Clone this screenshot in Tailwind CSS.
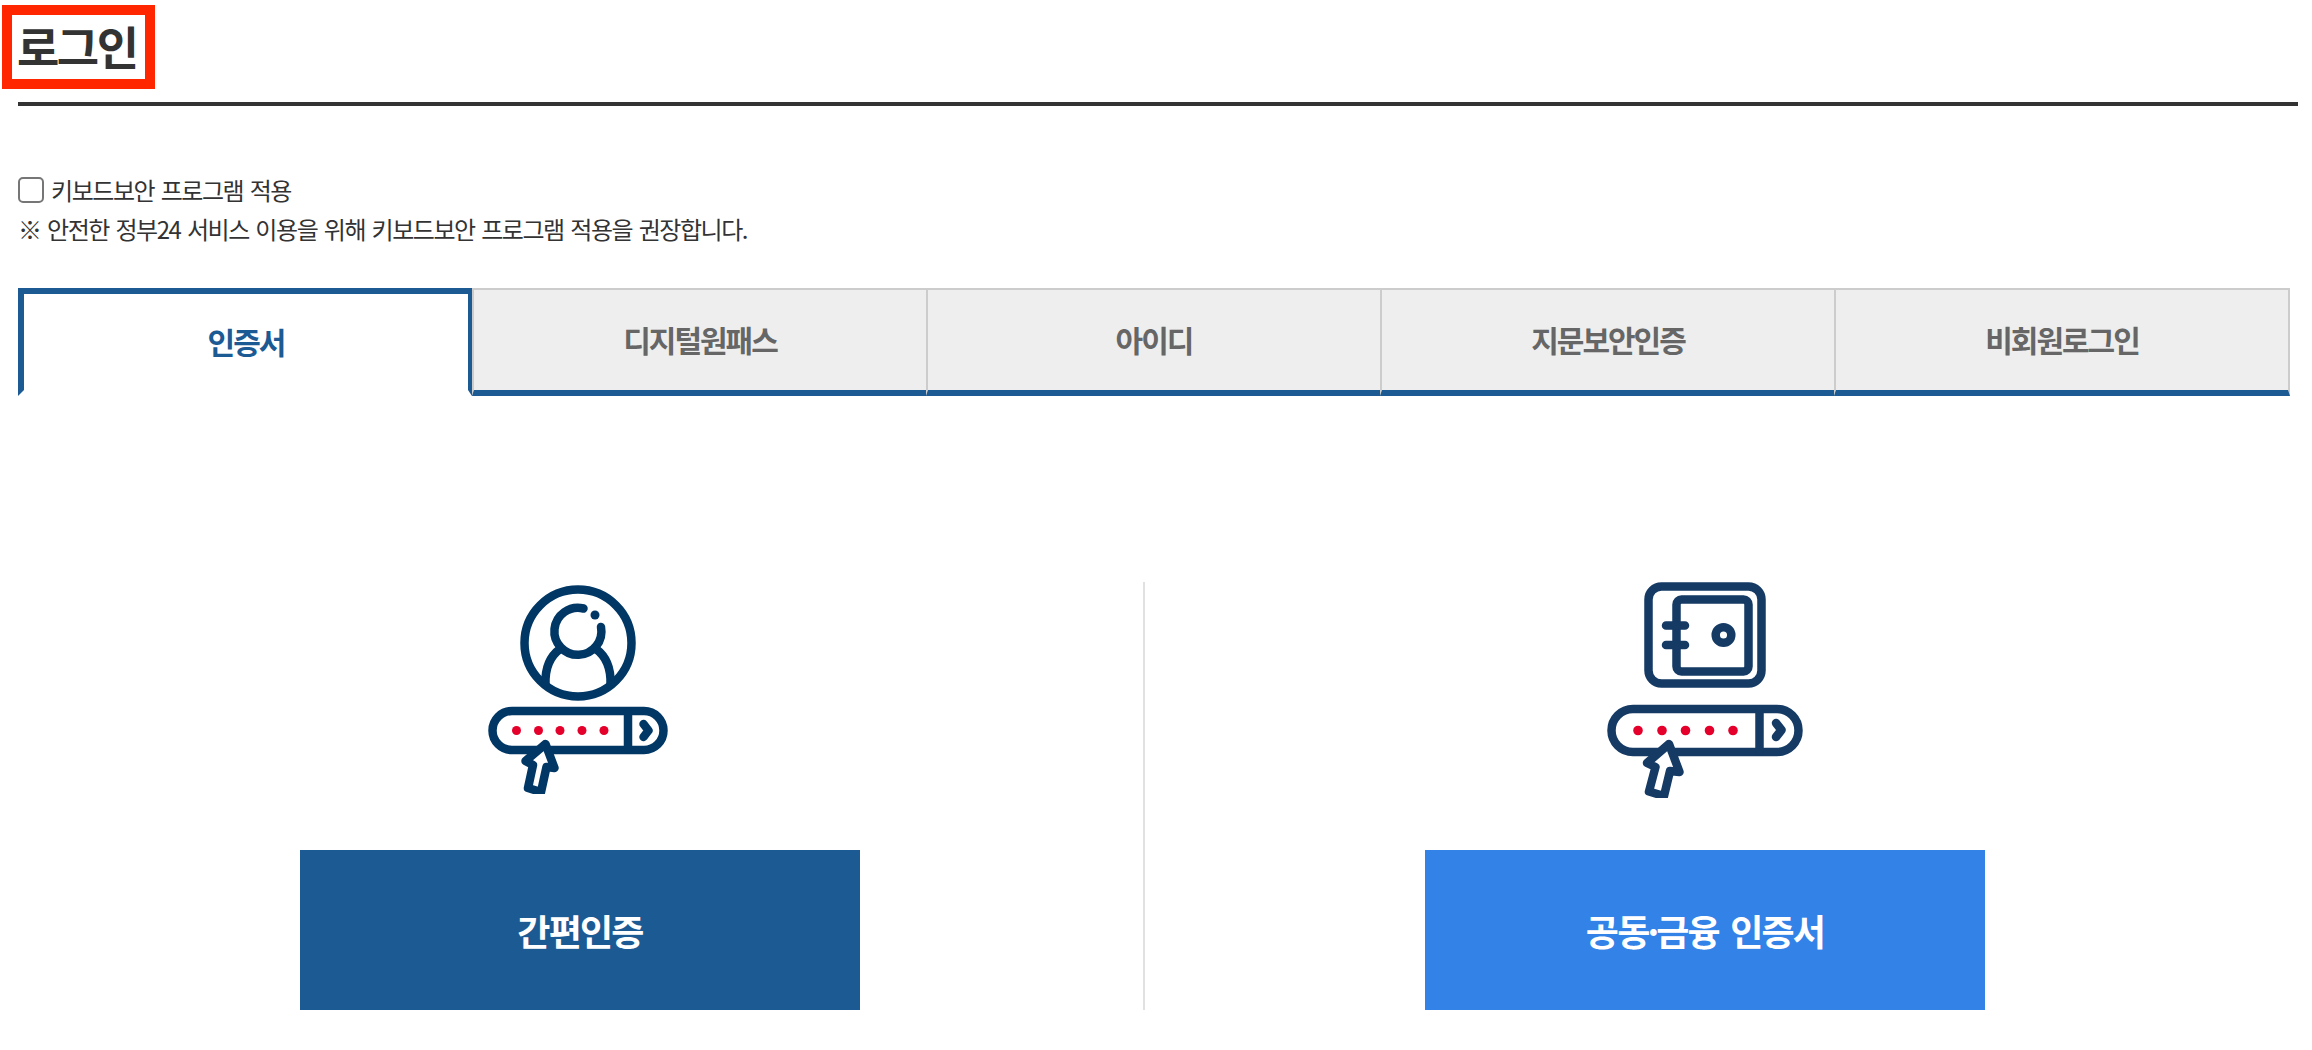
<!DOCTYPE html>
<html lang="ko">
<head>
    <meta charset="UTF-8">
    <meta name="viewport" content="width=device-width, initial-scale=1.0">
    <title>로그인</title>
    <script src="https://cdn.jsdelivr.net/npm/@tailwindcss/browser@4"></script>
</head>
<body class="bg-white h-[1050px] overflow-hidden font-['Noto_Sans_CJK_KR',sans-serif] text-[#333]">

    <!-- Page title -->
    <header class="ml-[18px] mr-3.5 h-[106px] border-b-4 border-[#333] pt-[5px]">
        <h1 class="-ml-4 w-[153px] h-[84px] border-[10px] border-[#ff2600] pl-[5px] text-[46px] leading-[60px] font-bold tracking-[-2.5px] whitespace-nowrap">로그인</h1>
    </header>

    <main class="ml-[18px] mr-[22px]">
        <!-- Keyboard security option -->
        <div class="pt-[64px] h-[182px] text-[24px] leading-[40px] tracking-[-0.06em] [word-spacing:1.2px]">
            <label class="flex items-center">
                <input type="checkbox" class="appearance-none size-[26px] mr-[7px] border-2 border-[#767676] rounded-[5px] bg-white">
                <span>키보드보안 프로그램 적용</span>
            </label>
            <p class="-mt-px"><span class="font-bold">※</span> 안전한 정부24 서비스 이용을 위해 키보드보안 프로그램 적용을 권장합니다.</p>
        </div>

        <!-- Login tabs -->
        <nav class="grid grid-cols-[repeat(4,454px)_456px] h-[108px] text-[30px] leading-[98px] tracking-[-2px] font-bold text-center text-[#666]">
            <a href="#" class="border-t-6 border-l-6 border-r-4 border-b-6 border-[#1c5a94] border-b-transparent text-[#1c5a94] bg-white leading-[94px]">인증서</a>
            <a href="#" class="border-t-2 border-l-2 border-b-6 border-[#ccc] border-b-[#1c5a94] bg-[#eee]">디지털원패스</a>
            <a href="#" class="border-t-2 border-l-2 border-b-6 border-[#ccc] border-b-[#1c5a94] bg-[#eee]">아이디</a>
            <a href="#" class="border-t-2 border-l-2 border-b-6 border-[#ccc] border-b-[#1c5a94] bg-[#eee]">지문보안인증</a>
            <a href="#" class="border-t-2 border-x-2 border-b-6 border-[#ccc] border-b-[#1c5a94] bg-[#eee]">비회원로그인</a>
        </nav>
    </main>

    <!-- Certificate choices -->
    <section class="mt-[186px] ml-[18px] mr-[22px] grid grid-cols-[1127px_1fr] h-[428px] text-[36px] font-bold tracking-[-0.05em] text-white">
        <div class="flex flex-col items-center justify-between border-r-2 border-[#e1e1e1] pr-px">
            <svg class="mt-[3px] -ml-1" width="180" height="209" viewBox="0 0 180 209" fill="none" stroke="#003764" stroke-width="8.5" stroke-linecap="round" stroke-linejoin="round">
                <circle cx="90" cy="58" r="53.5"/>
                <path d="M95.500 23.500A23.500 23.500 0 1 0 113 42"/>
                <circle cx="107" cy="30" r="4.500" fill="#003764" stroke="none"/>
                <path d="M72 64C61 72 57 83 57.500 99M108 64c11 8 15 19 14.500 35"/>
                <rect x="4.500" y="126" width="171" height="39" rx="19.500"/>
                <path d="M140 127v37"/>
                <path d="M155.500 139l5 6.500-5 6.500"/>
                <g fill="#e4002b" stroke="none">
                    <circle cx="28.500" cy="145.500" r="4.500"/><circle cx="50.500" cy="145.500" r="4.500"/><circle cx="72" cy="145.500" r="4.500"/><circle cx="94" cy="145.500" r="4.500"/><circle cx="116" cy="145.500" r="4.500"/>
                </g>
                <path d="M57.500 159L37.500 176l7.500 4-5 23 13 4 5.500-25 8 1z" fill="#fff"/>
            </svg>
            <a href="#" class="w-[560px] h-[160px] bg-[#1c5a94] leading-[160px] text-center">간편인증</a>
        </div>
        <div class="flex flex-col items-center justify-between pr-[25px]">
            <svg width="196" height="216" viewBox="0 0 196 216" fill="none" stroke="#153a64" stroke-width="8.5" stroke-linecap="round" stroke-linejoin="round">
                <rect x="41.500" y="4.500" width="113" height="97" rx="13"/>
                <rect x="69.500" y="17.500" width="72" height="72" rx="5"/>
                <path d="M59 43.500h19M59 63h19"/>
                <circle cx="116.500" cy="53" r="7.800"/>
                <rect x="4.500" y="127" width="187" height="43" rx="21.500"/>
                <path d="M152.500 128v41"/>
                <path d="M169 141l5.500 7-5.500 7"/>
                <g fill="#e4002b" stroke="none">
                    <circle cx="31" cy="148.500" r="4.800"/><circle cx="55" cy="148.500" r="4.800"/><circle cx="78.500" cy="148.500" r="4.800"/><circle cx="102.500" cy="148.500" r="4.800"/><circle cx="126" cy="148.500" r="4.800"/>
                </g>
                <path d="M62 162L40 181l8.500 4-6.500 24.500 15 4.500 6-25 9.500 1z" fill="#fff"/>
            </svg>
            <a href="#" class="w-[560px] h-[160px] bg-[#3382e8] leading-[160px] text-center [word-spacing:3px]">공동<span class="-ml-px tracking-[-3px]">·</span>금융 인증서</a>
        </div>
    </section>

</body>
</html>
